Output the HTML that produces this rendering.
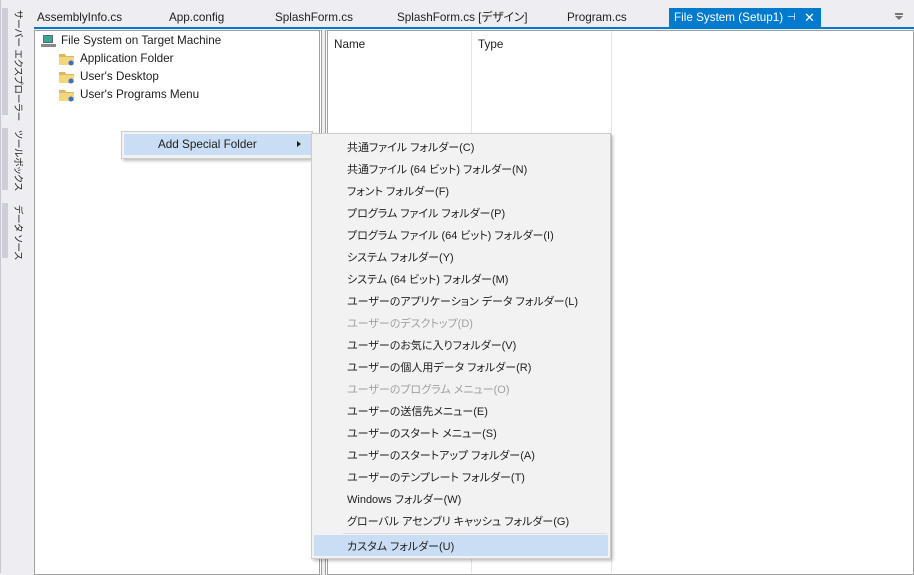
<!DOCTYPE html>
<html><head><meta charset="utf-8"><style>
body{margin:0;width:914px;height:573px;background:#eeeef2;font-family:"Liberation Sans","Noto Sans CJK JP",sans-serif;font-feature-settings:"palt";font-size:11.7px;line-height:16px;color:#1e1e1e;position:relative;overflow:hidden}
.a{position:absolute}
.vt{position:absolute;writing-mode:vertical-rl;text-orientation:sideways;font-size:9.6px;line-height:12px;left:11px;color:#1e1e1e;white-space:nowrap}
.bar{position:absolute;left:2px;width:6px;background:#ccced8}
.tab{position:absolute;top:10px;font-size:11.7px;white-space:nowrap}
.mi{position:absolute;left:347px;font-size:11px;white-space:nowrap}
.dis{color:#a0a0a0}
</style></head><body>
<div class="a" style="left:0;top:0;width:1px;height:573px;background:#c8c8d0"></div>
<div class="bar" style="top:8px;height:107px"></div>
<div class="bar" style="top:128px;height:62px"></div>
<div class="bar" style="top:203px;height:55px"></div>
<div class="vt" style="top:10px">サーバー エクスプローラー</div>
<div class="vt" style="top:130px">ツールボックス</div>
<div class="vt" style="top:205px">データ ソース</div>

<div class="tab" style="left:37px">AssemblyInfo.cs</div>
<div class="tab" style="left:169px">App.config</div>
<div class="tab" style="left:275px">SplashForm.cs</div>
<div class="tab" style="left:397px">SplashForm.cs [デザイン]</div>
<div class="tab" style="left:567px">Program.cs</div>
<div class="a" style="left:669px;top:8px;width:152px;height:20px;background:#007acc;color:#fff;font-size:11.7px;line-height:20px;white-space:nowrap"><span style="margin-left:5px">File System (Setup1)</span><span style="position:absolute;left:118px;top:0;font-size:10px">⊣</span><span style="position:absolute;left:135px;top:0;font-size:13px">✕</span></div>
<div class="a" style="left:895px;top:13px;width:8px;height:2px;background:#777"></div>
<div class="a" style="left:895px;top:16px;border-left:4px solid transparent;border-right:4px solid transparent;border-top:4px solid #777"></div>
<div class="a" style="left:34px;top:27px;width:880px;height:2px;background:#007acc"></div>

<div class="a" style="left:34px;top:30px;width:284px;height:543px;background:#fff;border:1px solid #a0a0a0;border-right:3px double #a0a0a0"></div>
<div class="a" style="left:325px;top:30px;width:585px;height:543px;background:#fff;border:1px solid #a0a0a0;border-left:3px double #a0a0a0"></div>
<div class="a" style="left:471px;top:31px;width:1px;height:542px;background:#e4e6ee"></div>
<div class="a" style="left:611px;top:31px;width:1px;height:542px;background:#e4e6ee"></div>
<div class="a" style="left:334px;top:37px">Name</div>
<div class="a" style="left:478px;top:37px">Type</div>

<svg class="a" style="left:41px;top:34px" width="16" height="14"><rect x="2" y="1" width="10" height="8" fill="#666"/><rect x="3" y="2" width="8" height="6" fill="#3a9"/><rect x="0" y="10" width="15" height="3" fill="#888"/></svg>
<div class="a" style="left:61px;top:33px">File System on Target Machine</div>
<svg class="a" style="left:59px;top:52px" width="16" height="14"><path d="M0 2h6l1 2h8v9H0z" fill="#dcb85a"/><rect x="0" y="5" width="15" height="8" fill="#f3d77d"/><circle cx="12" cy="11" r="2.5" fill="#3a70c0"/></svg>
<svg class="a" style="left:59px;top:70px" width="16" height="14"><path d="M0 2h6l1 2h8v9H0z" fill="#dcb85a"/><rect x="0" y="5" width="15" height="8" fill="#f3d77d"/><circle cx="12" cy="11" r="2.5" fill="#3a70c0"/></svg>
<svg class="a" style="left:59px;top:88px" width="16" height="14"><path d="M0 2h6l1 2h8v9H0z" fill="#dcb85a"/><rect x="0" y="5" width="15" height="8" fill="#f3d77d"/><circle cx="12" cy="11" r="2.5" fill="#3a70c0"/></svg>
<div class="a" style="left:80px;top:51px">Application Folder</div>
<div class="a" style="left:80px;top:69px">User's Desktop</div>
<div class="a" style="left:80px;top:87px">User's Programs Menu</div>

<div class="a" style="left:121px;top:131px;width:190px;height:26px;background:#f2f2f2;border:1px solid #ccc;box-shadow:2px 2px 3px rgba(0,0,0,.25)"></div>
<div class="a" style="left:124px;top:134px;width:187px;height:21px;background:#c9def5"></div>
<div class="a" style="left:158px;top:137px">Add Special Folder</div>
<div class="a" style="left:297px;top:141px;border-top:3px solid transparent;border-bottom:3px solid transparent;border-left:4px solid #1e1e1e"></div>

<div class="a" style="left:311px;top:133px;width:298px;height:424px;background:#f2f2f2;border:1px solid #ccc;box-shadow:2px 2px 3px rgba(0,0,0,.25)"></div>
<div class="a" style="left:343px;top:533px;width:264px;height:1px;background:#ddd"></div>
<div class="a" style="left:314px;top:535px;width:294px;height:21px;background:#c9def5"></div>
<div class="mi" style="top:140px">共通ファイル フォルダー(C)</div>
<div class="mi" style="top:162px">共通ファイル (64 ビット) フォルダー(N)</div>
<div class="mi" style="top:184px">フォント フォルダー(F)</div>
<div class="mi" style="top:206px">プログラム ファイル フォルダー(P)</div>
<div class="mi" style="top:228px">プログラム ファイル (64 ビット) フォルダー(I)</div>
<div class="mi" style="top:250px">システム フォルダー(Y)</div>
<div class="mi" style="top:272px">システム (64 ビット) フォルダー(M)</div>
<div class="mi" style="top:294px">ユーザーのアプリケーション データ フォルダー(L)</div>
<div class="mi dis" style="top:316px">ユーザーのデスクトップ(D)</div>
<div class="mi" style="top:338px">ユーザーのお気に入りフォルダー(V)</div>
<div class="mi" style="top:360px">ユーザーの個人用データ フォルダー(R)</div>
<div class="mi dis" style="top:382px">ユーザーのプログラム メニュー(O)</div>
<div class="mi" style="top:404px">ユーザーの送信先メニュー(E)</div>
<div class="mi" style="top:426px">ユーザーのスタート メニュー(S)</div>
<div class="mi" style="top:448px">ユーザーのスタートアップ フォルダー(A)</div>
<div class="mi" style="top:470px">ユーザーのテンプレート フォルダー(T)</div>
<div class="mi" style="top:492px">Windows フォルダー(W)</div>
<div class="mi" style="top:514px">グローバル アセンブリ キャッシュ フォルダー(G)</div>
<div class="mi" style="top:539px">カスタム フォルダー(U)</div>
</body></html>
